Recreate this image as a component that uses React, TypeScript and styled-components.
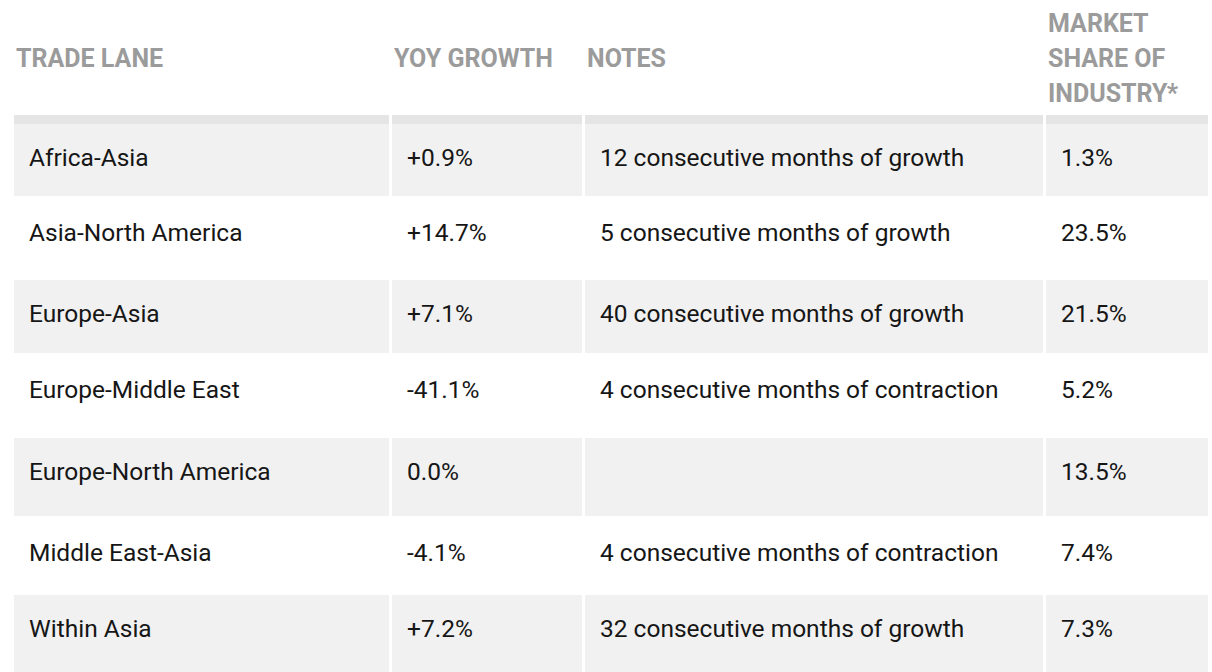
import React from 'react'
import styled, { createGlobalStyle } from 'styled-components'

const GlobalStyle = createGlobalStyle`
	html, body {
		margin: 0;
		padding: 0;
		background: #fff;
	}
	body {
		font-family: Roboto, "Liberation Sans", Arial, sans-serif;
		color: #1b1b1b;
	}
`

const Wrap = styled.div`
	padding: 0 0 0 11px;
	width: 1200px;
`

const Table = styled.table`
	width: 1200px;
	border-collapse: separate;
	border-spacing: 3px 0;
	table-layout: fixed;
`

const HeadCell = styled.th<{ $w: number }>`
	width: ${p => p.$w}px;
	padding: 6px 2px 4px;
	text-align: left;
	vertical-align: middle;
	font-size: 25px;
	line-height: 35px;
	font-weight: 700;
	color: #9b9b9b;
	text-transform: uppercase;
	border-bottom: 9px solid #e5e5e5;
`

const Row = styled.tr<{ $shaded: boolean; $h: number }>`
	height: ${p => p.$h}px;
	td {
		background: ${p => (p.$shaded ? '#f1f1f1' : '#fff')};
		padding-top: ${p => (p.$shaded ? 20 : 23)}px;
	}
`

const Cell = styled.td`
	padding: 0 6px 0 15px;
	vertical-align: top;
	font-size: 24.5px;
	line-height: 28px;
	color: #161616;
`

interface Lane {
	lane: string
	growth: string
	notes: string
	share: string
	h: number
}

const lanes: Lane[] = [
	{ lane: 'Africa-Asia', growth: '+0.9%', notes: '12 consecutive months of growth', share: '1.3%', h: 72 },
	{ lane: 'Asia-North America', growth: '+14.7%', notes: '5 consecutive months of growth', share: '23.5%', h: 84 },
	{ lane: 'Europe-Asia', growth: '+7.1%', notes: '40 consecutive months of growth', share: '21.5%', h: 73 },
	{ lane: 'Europe-Middle East', growth: '-41.1%', notes: '4 consecutive months of contraction', share: '5.2%', h: 85 },
	{ lane: 'Europe-North America', growth: '0.0%', notes: '', share: '13.5%', h: 78 },
	{ lane: 'Middle East-Asia', growth: '-4.1%', notes: '4 consecutive months of contraction', share: '7.4%', h: 79 },
	{ lane: 'Within Asia', growth: '+7.2%', notes: '32 consecutive months of growth', share: '7.3%', h: 78 },
]

export default function App() {
	return (
		<>
			<GlobalStyle />
			<Wrap>
				<Table>
					<thead>
						<tr>
							<HeadCell $w={371}>Trade Lane</HeadCell>
							<HeadCell $w={186}>YoY Growth</HeadCell>
							<HeadCell $w={454}>Notes</HeadCell>
							<HeadCell $w={158}>Market share of industry*</HeadCell>
						</tr>
					</thead>
					<tbody>
						{lanes.map((l, i) => (
							<Row key={l.lane} $shaded={i % 2 === 0} $h={l.h}>
								<Cell>{l.lane}</Cell>
								<Cell>{l.growth}</Cell>
								<Cell>{l.notes}</Cell>
								<Cell>{l.share}</Cell>
							</Row>
						))}
					</tbody>
				</Table>
			</Wrap>
		</>
	)
}
